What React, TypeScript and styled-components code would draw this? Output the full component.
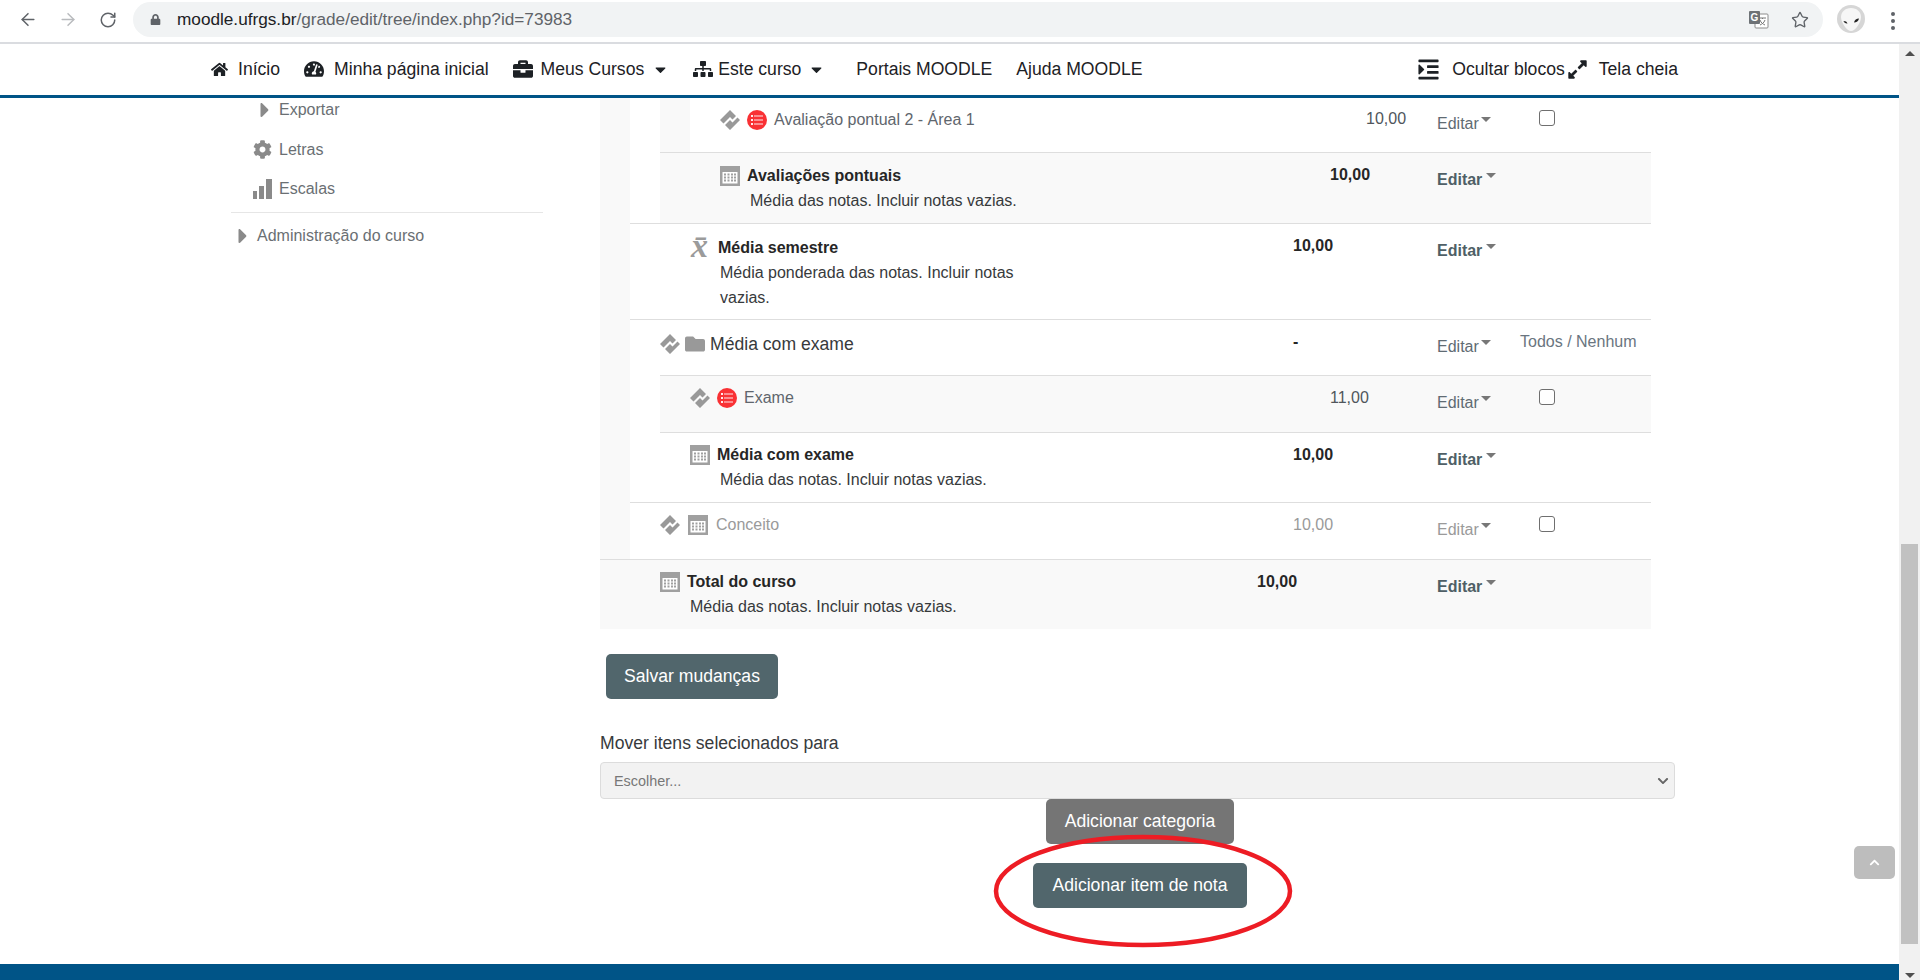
import React from 'react';
import styled, { createGlobalStyle } from 'styled-components';
import { ArrowLeft, ArrowRight, RotateCw, Star } from 'lucide-react';
import {
  FaBriefcase,
  FaCaretDown,
  FaCaretRight,
  FaChevronDown,
  FaChevronUp,
  FaCog,
  FaExpandAlt,
  FaFolder,
  FaHome,
  FaIndent,
  FaLock,
  FaSitemap,
  FaTachometerAlt,
} from 'react-icons/fa';

const GlobalStyle = createGlobalStyle`
  html, body {
    margin: 0;
    padding: 0;
    height: 100%;
    overflow: hidden;
    background: #fff;
    font-family: "Liberation Sans", Arial, sans-serif;
  }
  * { box-sizing: border-box; }
`;

const Screen = styled.div`
  width: 1920px;
  height: 980px;
  display: flex;
  flex-direction: column;
  overflow: hidden;
`;

/* browser toolbar */
const BrowserBar = styled.div`
  height: 44px;
  flex: none;
  display: flex;
  align-items: flex-start;
  padding: 2px 0 0 18px;
  background: #fff;
  border-bottom: 2px solid #dadce0;
`;

const BrowserButton = styled.span<{ $dim?: boolean }>`
  width: 20px;
  height: 35px;
  margin-right: 20px;
  display: flex;
  align-items: center;
  justify-content: center;
  color: ${p => (p.$dim ? '#b9bbbe' : '#5f6368')};
`;

const AddressBar = styled.div`
  width: 1690px;
  height: 35px;
  margin-left: -5px;
  padding: 0 14px 0 17px;
  display: flex;
  align-items: center;
  border-radius: 18px;
  background: #f1f3f4;
  color: #5f6368;
`;

const UrlText = styled.span`
  margin-left: 16px;
  font-size: 17.2px;
  flex: 1;
  color: #5f6368;
  b {
    font-weight: normal;
    color: #202124;
  }
`;

const AddressAction = styled.span`
  display: flex;
  margin-left: 22px;
`;

const ProfileSlot = styled.span`
  display: flex;
  margin: 3px 0 0 14px;
`;

const MenuDots = styled.span`
  margin: 10px 0 0 26px;
  display: flex;
  flex-direction: column;
  gap: 3px;
  i {
    width: 4px;
    height: 4px;
    border-radius: 50%;
    background: #5f6368;
  }
`;

/* page */
const Viewport = styled.div`
  flex: 1;
  display: flex;
  min-height: 0;
`;

const Page = styled.div`
  flex: 1;
  min-width: 0;
  display: flex;
  flex-direction: column;
`;

const Nav = styled.nav`
  height: 54px;
  flex: none;
  padding: 0 221px 1px 211px;
  display: flex;
  align-items: center;
  justify-content: space-between;
  border-bottom: 3px solid #005487;
  background: #fff;
  color: #1d2125;
  font-size: 17.6px;
`;

const NavGroup = styled.div<{ $gap: number }>`
  display: flex;
  align-items: center;
  gap: ${p => p.$gap}px;
`;

const NavItem = styled.span<{ $gap?: number; $push?: number }>`
  display: flex;
  align-items: center;
  gap: ${p => p.$gap ?? 10}px;
  margin-left: ${p => p.$push ?? 0}px;
  white-space: nowrap;
`;

const NavCaret = styled(FaCaretDown)<{ $push?: number }>`
  margin-left: ${p => p.$push ?? 0}px;
`;

const Content = styled.div`
  flex: 1;
  min-height: 0;
  position: relative;
  display: flex;
  overflow: hidden;
`;

const Footer = styled.footer`
  height: 16px;
  flex: none;
  background: #005487;
`;

/* side block */
const Sidebar = styled.aside`
  width: 600px;
  flex: none;
  padding: 0 57px 0 231px;
  font-size: 16px;
  color: #6a6f73;
`;

const TreeRow = styled.div<{ $left: number; $gap: number }>`
  height: 39px;
  padding-left: ${p => p.$left}px;
  display: flex;
  align-items: center;
  gap: ${p => p.$gap}px;
  color: #6a6f73;
  svg {
    color: #8a8a8a;
    flex: none;
  }
`;

const ExportRow = styled(TreeRow)`
  height: 24px;
  margin-bottom: 8px;
`;

const Divider = styled.hr`
  margin: 4px 0 3px;
  border: 0;
  border-top: 1px solid #e6e6e6;
`;

const AdminRow = styled(TreeRow)`
  height: 40px;
`;

/* grade tree */
const Main = styled.main`
  width: 1080px;
  flex: none;
`;

const TreeTable = styled.div`
  width: 1051px;
  margin-top: -2px;
`;

const Row = styled.div<{ $height: number }>`
  height: ${p => p.$height}px;
  display: flex;
`;

const Band = styled.div<{ $tint: boolean }>`
  width: 30px;
  flex: none;
  background: ${p => (p.$tint ? '#f9f9f9' : '#fff')};
`;

const RowBody = styled.div<{ $tint?: boolean; $first?: boolean }>`
  flex: 1;
  min-width: 0;
  display: flex;
  padding-top: 12px;
  background: ${p => (p.$tint ? '#f9f9f9' : '#fff')};
  border-top: 1px solid ${p => (p.$first ? 'transparent' : '#dedede')};
`;

const NameCell = styled.div<{ $width: number; $pad: number; $nudge: number }>`
  width: ${p => p.$width}px;
  flex: none;
  padding: ${p => p.$nudge}px 0 0 ${p => p.$pad}px;
`;

const NameLine = styled.div<{ $gap: number }>`
  height: 20px;
  display: flex;
  align-items: center;
  gap: ${p => p.$gap}px;
`;

const ItemName = styled.span<{ $muted?: boolean }>`
  font-size: 16px;
  color: ${p => (p.$muted ? '#9a9a9a' : '#5f666d')};
`;

const CategoryName = styled.span`
  font-size: 17.6px;
  color: #373a3c;
`;

const TotalName = styled.strong`
  margin-left: 7px;
  font-size: 16px;
  color: #262626;
`;

const Description = styled.div`
  margin: 2px 0 0 30px;
  max-width: 330px;
  font-size: 16px;
  line-height: 25px;
  color: #373a3c;
`;

const GradeCell = styled.div<{ $bold?: boolean; $muted?: boolean }>`
  flex: 1;
  font-size: 16px;
  line-height: 20px;
  font-weight: ${p => (p.$bold ? 700 : 400)};
  color: ${p => (p.$muted ? '#9a9a9a' : p.$bold ? '#262626' : '#50565c')};
`;

const ActionCell = styled.div`
  width: 83px;
  flex: none;
  padding-top: 5px;
`;

const EditMenu = styled.span<{ $bold?: boolean; $muted?: boolean }>`
  display: inline-flex;
  font-size: 16px;
  line-height: 20px;
  font-weight: ${p => (p.$bold ? 700 : 400)};
  color: ${p => (p.$muted ? '#9a9a9a' : p.$bold ? '#4f5f66' : '#5f6b73')};
  &::after {
    content: '';
    width: 0;
    height: 0;
    margin: 0 0 0 ${p => (p.$bold ? 4 : 2)}px;
    position: relative;
    top: 3px;
    border-top: 5px solid #777;
    border-left: 5px solid transparent;
    border-right: 5px solid transparent;
  }
`;

const SelectCell = styled.div`
  width: 131px;
  flex: none;
  font-size: 16px;
  line-height: 20px;
  color: #6a7580;
`;

const RowCheck = styled.input.attrs({ type: 'checkbox' })`
  display: block;
  appearance: none;
  width: 16px;
  height: 16px;
  margin: 1px 0 0 19px;
  border: 1px solid #6f6f6f;
  border-radius: 3px;
  background: #fff;
`;

const MeanGlyph = styled.span`
  width: 20px;
  height: 20px;
  margin-left: 1px;
  flex: none;
  font-family: "Liberation Serif", serif;
  font-size: 34px;
  font-style: italic;
  font-weight: 700;
  line-height: 16px;
  color: #9b9b9b;
`;

const SaveButton = styled.button<{ $grey?: boolean; $pad?: number }>`
  display: block;
  height: 45px;
  padding: 0 ${p => p.$pad ?? 19}px;
  border: 0;
  border-radius: 5px;
  background: ${p => (p.$grey ? '#757575' : '#51666c')};
  color: #fff;
  font-family: inherit;
  font-size: 17.6px;
`;

const SaveRow = styled.div`
  padding: 25px 0 0 6px;
`;

const MoveLabel = styled.label`
  display: block;
  margin-top: 34px;
  line-height: 20px;
  font-size: 17.6px;
  color: #373a3c;
`;

const FakeSelect = styled.div`
  width: 1075px;
  height: 37px;
  margin-top: 9px;
  padding: 0 5px 0 13px;
  display: flex;
  align-items: center;
  justify-content: space-between;
  border: 1px solid #dcdcdc;
  border-radius: 4px;
  background: #f2f2f2;
  font-size: 14.4px;
  color: #777;
  svg {
    color: #666;
  }
`;

const ButtonStack = styled.div`
  position: relative;
  display: flex;
  flex-direction: column;
  align-items: center;
  gap: 19px;
`;

const HighlightRing = styled.svg`
  position: absolute;
  left: 393px;
  top: 35px;
`;

const BackToTop = styled.button`
  position: absolute;
  left: 1854px;
  top: 748px;
  width: 41px;
  height: 33px;
  padding: 0;
  display: flex;
  align-items: center;
  justify-content: center;
  border: 0;
  border-radius: 5px;
  background: #bdbdbd;
  color: #fff;
`;

/* window scrollbar */
const Scrollbar = styled.div`
  width: 21px;
  flex: none;
  padding: 7px 2px 0;
  display: flex;
  flex-direction: column;
  align-items: center;
  background: #f1f1f1;
`;

const ArrowUp = styled.i`
  width: 0;
  height: 0;
  border-left: 5px solid transparent;
  border-right: 5px solid transparent;
  border-bottom: 5px solid #505050;
`;

const ScrollThumb = styled.div`
  width: 17px;
  height: 400px;
  margin-top: 488px;
  background: #c1c1c1;
`;

const ArrowDown = styled.i`
  width: 0;
  height: 0;
  margin-top: 29px;
  border-left: 5px solid transparent;
  border-right: 5px solid transparent;
  border-top: 5px solid #505050;
`;

const MoveIcon = () => (
  <svg width="20" height="20" viewBox="0 0 20 20" fill="#999">
    <path d="M0 10 10 0l6 6-3.500 3.500L10 7l-6.500 6.500Z" />
    <path d="M20 10 10 20l-5-5 5-5 2.500 2.500 5-5Z" />
  </svg>
);

const ManualIcon = () => (
  <svg width="20" height="20" viewBox="0 0 20 20">
    <circle cx="10" cy="10" r="10" fill="#f93134" />
    <g fill="#fff" opacity=".9">
      <rect x="4" y="5" width="2" height="2" />
      <rect x="4" y="9" width="2" height="2" />
      <rect x="4" y="13" width="2" height="2" />
      <rect x="7" y="5.5" width="9" height="1" />
      <rect x="7" y="9.5" width="9" height="1" />
      <rect x="7" y="13.5" width="9" height="1" />
    </g>
  </svg>
);

const CalcIcon = () => (
  <svg width="20" height="20" viewBox="0 0 20 20">
    <rect x=".5" y=".5" width="19" height="19" fill="#fff" stroke="#a0a0a0" />
    <rect x="1" y="1" width="18" height="5" fill="#a0a0a0" />
    <rect x="1" y="1" width="1.5" height="18" fill="#a0a0a0" />
    <rect x="17.5" y="1" width="1.5" height="18" fill="#a0a0a0" />
    <rect x="1" y="17.5" width="18" height="1.5" fill="#a0a0a0" />
    {[7.5, 10.5, 13.5].map(y =>
      [4, 7.5, 11, 14].map(x => <rect key={`${x}-${y}`} x={x} y={y} width="2" height="2" fill="#a0a0a0" />)
    )}
  </svg>
);

const BarsIcon = () => (
  <svg width="19" height="20" viewBox="0 0 19 20" fill="currentColor">
    <rect x="0" y="12" width="4" height="8" />
    <rect x="6" y="7" width="5" height="13" />
    <rect x="13" y="0" width="6" height="20" />
  </svg>
);

const TranslateIcon = () => (
  <svg width="20" height="18" viewBox="0 0 20 18">
    <rect x="6" y="3" width="13" height="14" rx="1" fill="#fff" stroke="#8c8c8c" />
    <path d="M10 7h7M13.5 7v1M11 9c1 3 3 4 5 5M16 9c-1 3-3 4-5 5" fill="none" stroke="#777" />
    <rect x="0" y="0" width="11" height="13" rx="1" fill="#6e7276" />
    <text x="5.5" y="10" textAnchor="middle" fontSize="10" fontWeight="700" fontFamily="Liberation Sans" fill="#fff">
      G
    </text>
  </svg>
);

const AlienAvatar = () => (
  <svg width="28" height="28" viewBox="0 0 28 28">
    <circle cx="14" cy="14" r="14" fill="#d6d6d6" />
    <path d="M14 3c6 0 10 4 10 9 0 6-6 14-10 14S4 18 4 12c0-5 4-9 10-9Z" fill="#f6f6f6" />
    <path d="M6.500 16c2 0 3.500.8 4 2.500-2 .2-3.500-.8-4-2.500ZM22 13.500c-2.500 0-4.500 1.500-5 4 2.500 0 4.500-1.500 5-4Z" fill="#222" />
  </svg>
);

type RowProps = {
  height: number;
  bands: boolean[];
  tint?: boolean;
  first?: boolean;
  nameWidth: number;
  pad: number;
  nudge?: number;
  gap?: number;
  lead: React.ReactNode;
  desc?: string;
  grade: string;
  bold?: boolean;
  plainEdit?: boolean;
  muted?: boolean;
  select?: React.ReactNode;
};

const TreeItem: React.FC<RowProps> = ({
  height,
  bands,
  tint,
  first,
  nameWidth,
  pad,
  nudge = 0,
  gap = 7,
  lead,
  desc,
  grade,
  bold,
  plainEdit,
  muted,
  select,
}) => (
  <Row $height={height}>
    {bands.map((b, i) => (
      <Band key={i} $tint={b} />
    ))}
    <RowBody $tint={tint} $first={first}>
      <NameCell $width={nameWidth} $pad={pad} $nudge={nudge}>
        <NameLine $gap={gap}>{lead}</NameLine>
        {desc && <Description>{desc}</Description>}
      </NameCell>
      <GradeCell $bold={bold} $muted={muted}>
        {grade}
      </GradeCell>
      <ActionCell>
        <EditMenu $bold={bold && !plainEdit} $muted={muted}>
          Editar
        </EditMenu>
      </ActionCell>
      <SelectCell>{select}</SelectCell>
    </RowBody>
  </Row>
);

const App: React.FC = () => (
  <Screen>
    <GlobalStyle />
    <BrowserBar>
      <BrowserButton>
        <ArrowLeft size={21} strokeWidth={1.8} />
      </BrowserButton>
      <BrowserButton $dim>
        <ArrowRight size={21} strokeWidth={1.8} />
      </BrowserButton>
      <BrowserButton>
        <RotateCw size={18} strokeWidth={2} />
      </BrowserButton>
      <AddressBar>
        <FaLock size={11} />
        <UrlText>
          <b>moodle.ufrgs.br</b>/grade/edit/tree/index.php?id=73983
        </UrlText>
        <AddressAction>
          <TranslateIcon />
        </AddressAction>
        <AddressAction>
          <Star size={18} strokeWidth={1.8} />
        </AddressAction>
      </AddressBar>
      <ProfileSlot>
        <AlienAvatar />
      </ProfileSlot>
      <MenuDots>
        <i />
        <i />
        <i />
      </MenuDots>
    </BrowserBar>

    <Viewport>
      <Page>
        <Nav>
          <NavGroup $gap={24}>
            <NavItem>
              <FaHome size={17} />
              Início
            </NavItem>
            <NavItem>
              <FaTachometerAlt size={20} />
              Minha página inicial
            </NavItem>
            <NavItem $gap={8}>
              <FaBriefcase size={20} />
              Meus Cursos
              <NavCaret size={17} />
            </NavItem>
            <NavItem $gap={5}>
              <FaSitemap size={20} />
              Este curso
              <NavCaret size={17} $push={2} />
            </NavItem>
            <NavItem $push={7}>Portais MOODLE</NavItem>
            <NavItem>Ajuda MOODLE</NavItem>
          </NavGroup>
          <NavGroup $gap={2}>
            <NavItem $gap={12}>
              <FaIndent size={23} />
              Ocultar blocos
            </NavItem>
            <NavItem $gap={11}>
              <FaExpandAlt size={21} />
              Tela cheia
            </NavItem>
          </NavGroup>
        </Nav>

        <Content>
          <Sidebar>
            <ExportRow $left={22} $gap={2}>
              <FaCaretRight size={24} />
              Exportar
            </ExportRow>
            <TreeRow $left={22} $gap={7}>
              <FaCog size={19} />
              Letras
            </TreeRow>
            <TreeRow $left={22} $gap={7}>
              <BarsIcon />
              Escalas
            </TreeRow>
            <Divider />
            <AdminRow $left={0} $gap={2}>
              <FaCaretRight size={24} />
              Administração do curso
            </AdminRow>
          </Sidebar>

          <Main>
            <TreeTable>
              <TreeItem
                first
                height={56}
                bands={[true, false, true]}
                nameWidth={676}
                pad={30}
                nudge={1}
                lead={
                  <>
                    <MoveIcon />
                    <ManualIcon />
                    <ItemName>Avaliação pontual 2 - Área 1</ItemName>
                  </>
                }
                grade="10,00"
                select={<RowCheck readOnly />}
              />
              <TreeItem
                tint
                height={71}
                bands={[true, false]}
                nameWidth={670}
                pad={60}
                nudge={1}
                gap={0}
                lead={
                  <>
                    <CalcIcon />
                    <TotalName>Avaliações pontuais</TotalName>
                  </>
                }
                desc="Média das notas. Incluir notas vazias."
                grade="10,00"
                bold
              />
              <TreeItem
                height={96}
                bands={[true]}
                nameWidth={663}
                pad={60}
                nudge={2}
                gap={0}
                lead={
                  <>
                    <MeanGlyph>x̄</MeanGlyph>
                    <TotalName>Média semestre</TotalName>
                  </>
                }
                desc="Média ponderada das notas. Incluir notas vazias."
                grade="10,00"
                bold
              />
              <TreeItem
                height={56}
                bands={[true]}
                nameWidth={663}
                pad={30}
                nudge={2}
                gap={5}
                lead={
                  <>
                    <MoveIcon />
                    <FaFolder size={20} color="#999" />
                    <CategoryName>Média com exame</CategoryName>
                  </>
                }
                grade="-"
                bold
                plainEdit
                select="Todos / Nenhum"
              />
              <TreeItem
                tint
                height={57}
                bands={[true, false]}
                nameWidth={670}
                pad={30}
                gap={7}
                lead={
                  <>
                    <MoveIcon />
                    <ManualIcon />
                    <ItemName>Exame</ItemName>
                  </>
                }
                grade="11,00"
                select={<RowCheck readOnly />}
              />
              <TreeItem
                height={70}
                bands={[true, false]}
                nameWidth={633}
                pad={30}
                gap={0}
                lead={
                  <>
                    <CalcIcon />
                    <TotalName>Média com exame</TotalName>
                  </>
                }
                desc="Média das notas. Incluir notas vazias."
                grade="10,00"
                bold
              />
              <TreeItem
                height={57}
                bands={[true]}
                nameWidth={663}
                pad={30}
                gap={8}
                lead={
                  <>
                    <MoveIcon />
                    <CalcIcon />
                    <ItemName $muted>Conceito</ItemName>
                  </>
                }
                grade="10,00"
                muted
                select={<RowCheck readOnly />}
              />
              <TreeItem
                tint
                height={70}
                bands={[]}
                nameWidth={657}
                pad={60}
                gap={0}
                lead={
                  <>
                    <CalcIcon />
                    <TotalName>Total do curso</TotalName>
                  </>
                }
                desc="Média das notas. Incluir notas vazias."
                grade="10,00"
                bold
              />
            </TreeTable>

            <SaveRow>
              <SaveButton $pad={18}>Salvar mudanças</SaveButton>
            </SaveRow>
            <MoveLabel>Mover itens selecionados para</MoveLabel>
            <FakeSelect>
              Escolher...
              <FaChevronDown size={12} />
            </FakeSelect>
            <ButtonStack>
              <SaveButton $grey>Adicionar categoria</SaveButton>
              <SaveButton>Adicionar item de nota</SaveButton>
              <HighlightRing width="300" height="114" viewBox="0 0 300 114" fill="none">
                <ellipse cx="150" cy="57" rx="147" ry="54" stroke="#ed1c24" strokeWidth="4.500" />
              </HighlightRing>
            </ButtonStack>
          </Main>

          <BackToTop>
            <FaChevronUp size={11} />
          </BackToTop>
        </Content>
        <Footer />
      </Page>

      <Scrollbar>
        <ArrowUp />
        <ScrollThumb />
        <ArrowDown />
      </Scrollbar>
    </Viewport>
  </Screen>
);

export default App;
